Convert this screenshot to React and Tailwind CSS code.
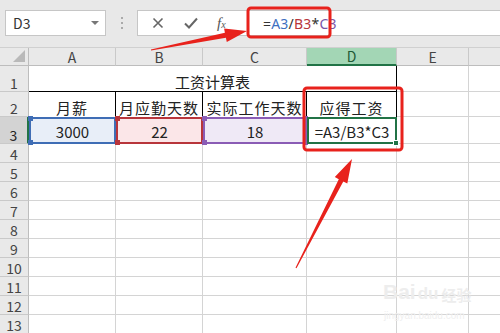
import React from "react";

const font = { fontFamily: '"Noto Sans CJK SC", "Noto Sans", sans-serif' };

const cols = ["w-[87px]", "w-[87px]", "w-[104px]", "w-[90px]", "w-[72px]"];

const arrowPts = (x1, y1, x2, y2, shaft, head, headLen) => {
  const dx = x2 - x1;
  const dy = y2 - y1;
  const len = Math.hypot(dx, dy);
  const ux = dx / len;
  const uy = dy / len;
  const px = -uy;
  const py = ux;
  const bx = x2 - ux * headLen;
  const by = y2 - uy * headLen;
  const p = (x, y) => `${x.toFixed(1)},${y.toFixed(1)}`;
  return [
    p(x1 + px * 0.6, y1 + py * 0.6),
    p(bx + (px * shaft) / 2, by + (py * shaft) / 2),
    p(bx + (px * head) / 2, by + (py * head) / 2),
    p(x2, y2),
    p(bx - (px * head) / 2, by - (py * head) / 2),
    p(bx - (px * shaft) / 2, by - (py * shaft) / 2),
    p(x1 - px * 0.6, y1 - py * 0.6),
  ].join(" ");
};

const RowHead = ({ n, active, h }) => (
  <div
    className={`w-[29px] ${h} flex items-end justify-center pb-px text-[14px] leading-none border-b border-[#c9c9c9] ${
      active
        ? "bg-[#d3d3d3] text-[#222] border-r-2 border-r-[#217346]"
        : "bg-[#e9e9e9] text-[#444] border-r border-r-[#bdbdbd]"
    }`}
  >
    {n}
  </div>
);

const Corner = ({ c, pos }) => (
  <span className={`absolute w-[5px] h-[5px] ${c} ${pos}`} />
);

export default function App() {
  return (
    <div
      className="relative w-[500px] h-[333px] overflow-hidden bg-white text-[#222]"
      style={font}
    >
      {/* toolbar */}
      <div className="h-[47px] bg-[#e8e8e8] flex items-start pt-[10px] pl-[5px]">
        <div className="w-[101px] h-[26px] bg-white border border-[#c6c6c6] flex items-center justify-between pl-[7px] pr-[6px] text-[14px] text-[#333]">
          <span>D3</span>
          <span className="w-0 h-0 border-l-[4px] border-r-[4px] border-t-[4px] border-l-transparent border-r-transparent border-t-[#777]" />
        </div>
        <div className="w-[31px] h-[26px] flex flex-col items-center justify-center gap-[3px]">
          <span className="w-[2px] h-[2px] bg-[#aaa]" />
          <span className="w-[2px] h-[2px] bg-[#aaa]" />
          <span className="w-[2px] h-[2px] bg-[#aaa]" />
        </div>
        <div className="flex-1 h-[26px] bg-white border border-r-0 border-[#c6c6c6] flex items-center">
          <div className="w-[104px] flex items-center text-[#666]">
            <svg width="12" height="12" viewBox="0 0 12 12" className="ml-[14px]">
              <path d="M1.5 1.5L10.5 10.5M10.5 1.5L1.5 10.5" stroke="#666" strokeWidth="1.6" />
            </svg>
            <svg width="14" height="12" viewBox="0 0 14 12" className="ml-[20px]">
              <path d="M1 6.5L5 10.5L13 1.5" stroke="#666" strokeWidth="2" fill="none" />
            </svg>
            <span className="ml-[19px] italic text-[15px] text-[#555]" style={{ fontFamily: '"Liberation Serif", serif' }}>
              f<span className="text-[10px]">x</span>
            </span>
          </div>
          <div className="pl-[21px] text-[14px] tracking-[0.2px]" style={{ fontFamily: '"Noto Sans", sans-serif' }}>
            <span className="text-[#333]">=</span>
            <span className="text-[#3e6fbf]">A3</span>
            <span className="text-[#333]">/</span>
            <span className="text-[#b8353b]">B3</span>
            <span className="text-[#333]">*</span>
            <span className="text-[#7a55a8]">C3</span>
          </div>
        </div>
      </div>

      {/* column header */}
      <div className="flex h-[19px] bg-[#e9e9e9] border-t border-[#d0d0d0]">
        <div className="w-[29px] relative border-r border-b border-[#bdbdbd]">
          <svg width="12" height="12" className="absolute right-[3px] bottom-[3px]">
            <polygon points="12,0 12,12 0,12" fill="#b9b9b9" />
          </svg>
        </div>
        {["A", "B", "C", "D", "E"].map((c, i) => (
          <div
            key={c}
            className={`${cols[i]} flex items-center justify-center text-[14px] leading-none border-r border-[#c9c9c9] ${
              c === "D"
                ? "bg-[#a3d6b5] text-[#1f5a36] border-b-2 border-b-[#217346]"
                : "text-[#444] border-b border-b-[#bdbdbd]"
            }`}
          >
            {c}
          </div>
        ))}
        <div className="flex-1 border-b border-[#bdbdbd]" />
      </div>

      {/* row 1 */}
      <div className="flex h-[26px]">
        <RowHead n="1" h="h-[26px]" />
        <div className="w-[368px] flex items-end justify-center pb-[2px] text-[15px] leading-none border-r border-b border-black">
          工资计算表
        </div>
        <div className="w-[72px] border-r border-b border-[#d4d4d4]" />
        <div className="flex-1 border-b border-[#d4d4d4]" />
      </div>

      {/* row 2 */}
      <div className="flex h-[25px]">
        <RowHead n="2" h="h-[25px]" />
        {["月薪", "月应勤天数", "实际工作天数", "应得工资"].map((t, i) => (
          <div
            key={t}
            className={`${cols[i]} flex items-end justify-center pb-[2px] text-[15px] leading-none tracking-[1px] border-r border-black`}
          >
            {t}
          </div>
        ))}
        <div className="w-[72px] border-r border-b border-[#d4d4d4]" />
        <div className="flex-1 border-b border-[#d4d4d4]" />
      </div>

      {/* row 3 */}
      <div className="flex h-[27px]">
        <RowHead n="3" h="h-[27px]" active />
        <div className="relative w-[87px] bg-[#e8eef8] border-2 border-[#3f6db5] flex items-end justify-center pb-[3px] text-[15px] leading-none">
          3000
          <Corner c="bg-[#3f6db5]" pos="-left-[3px] -top-[3px]" />
          <Corner c="bg-[#3f6db5]" pos="-left-[3px] -bottom-[3px]" />
        </div>
        <div className="relative w-[87px] bg-[#fbe6e8] border-2 border-[#b8353b] flex items-end justify-center pb-[3px] text-[15px] leading-none">
          22
          <Corner c="bg-[#b8353b]" pos="-left-[3px] -top-[3px]" />
          <Corner c="bg-[#b8353b]" pos="-left-[3px] -bottom-[3px]" />
        </div>
        <div className="relative w-[104px] bg-[#efe9f6] border-2 border-[#8a5cb5] flex items-end justify-center pb-[3px] text-[15px] leading-none">
          18
          <Corner c="bg-[#8a5cb5]" pos="-left-[3px] -top-[3px]" />
          <Corner c="bg-[#8a5cb5]" pos="-left-[3px] -bottom-[3px]" />
          <Corner c="bg-[#8a5cb5]" pos="-right-[3px] -top-[3px]" />
          <Corner c="bg-[#8a5cb5]" pos="-right-[3px] -bottom-[3px]" />
        </div>
        <div className="relative w-[90px] border-2 border-[#217346] flex items-end justify-center pb-[3px] text-[15px] leading-none">
          =A3/B3*C3
          <span className="absolute -right-[4px] -bottom-[4px] w-[6px] h-[6px] bg-[#217346] border border-white" />
        </div>
        <div className="w-[72px] border-r border-b border-[#d4d4d4]" />
        <div className="flex-1 border-b border-[#d4d4d4]" />
      </div>

      {/* rows 4-13 */}
      {[4, 5, 6, 7, 8, 9, 10, 11, 12, 13].map((n) => (
        <div key={n} className="flex h-[19px]">
          <RowHead n={n} h="h-[19px]" />
          {cols.map((w, i) => (
            <div key={i} className={`${w} border-r border-b border-[#d4d4d4]`} />
          ))}
          <div className="flex-1 border-b border-[#d4d4d4]" />
        </div>
      ))}

      {/* watermark */}
      <div className="absolute left-[383px] top-[281px] flex items-end text-[#ededed] leading-none">
        <span className="text-[21px] font-bold" style={{ fontFamily: '"Liberation Sans", sans-serif' }}>Bai</span>
        <span className="text-[17px] font-bold ml-[2px]" style={{ fontFamily: '"Liberation Sans", sans-serif' }}>du</span>
        <span className="text-[15px] font-bold ml-[3px]">经验</span>
      </div>
      <div className="absolute left-[384px] top-[311px] text-[10px] text-[#efefef] leading-none" style={{ fontFamily: '"Liberation Sans", sans-serif' }}>
        jingyan.baidu.com
      </div>

      {/* annotations */}
      <svg className="absolute inset-0 pointer-events-none" width="500" height="333">
        <rect x="248" y="8" width="82" height="29" rx="3" fill="none" stroke="#e8221c" strokeWidth="3" />
        <rect x="304" y="88" width="98" height="62" rx="3" fill="none" stroke="#e8221c" strokeWidth="3" />
        <polygon points={arrowPts(151, 50, 247, 31, 5, 14, 22)} fill="#e8221c" />
        <polygon points={arrowPts(296, 268, 352, 159, 5, 14, 24)} fill="#e8221c" />
      </svg>
    </div>
  );
}
